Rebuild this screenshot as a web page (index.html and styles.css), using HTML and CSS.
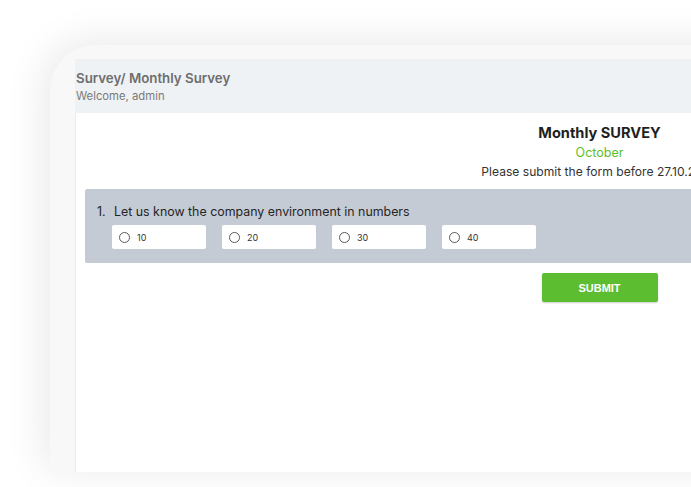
FILE: index.html
```html
<!DOCTYPE html>
<html lang="en">
<head>
<meta charset="utf-8">
<title>Monthly Survey</title>
<link rel="stylesheet" href="styles.css">
</head>
<body>
<div class="stage">
  <div class="device">
    <div class="screen">
      <div class="header">
        <div class="crumb">Survey/ Monthly Survey</div>
        <div class="welcome">Welcome, admin</div>
      </div>
      <div class="card">
        <div class="card-head">
          <div class="survey-title">Monthly SURVEY</div>
          <div class="month">October</div>
          <div class="deadline">Please submit the form before 27.10.2023</div>
        </div>
        <div class="question">
          <div class="q-text"><span class="q-num">1.</span>Let us know the company environment in numbers</div>
          <div class="options">
            <label class="option"><span class="radio"></span>10</label>
            <label class="option"><span class="radio"></span>20</label>
            <label class="option"><span class="radio"></span>30</label>
            <label class="option"><span class="radio"></span>40</label>
          </div>
        </div>
        <div class="actions">
          <button class="submit">SUBMIT</button>
        </div>
      </div>
    </div>
  </div>
</div>
</body>
</html>
```
FILE: styles.css
```css
html, body {
  margin: 0;
  padding: 0;
  background: #ffffff;
}
body {
  width: 691px;
  height: 487px;
  overflow: hidden;
  font-family: "Inter", "Open Sans", sans-serif;
  color: #222;
}
.stage {
  padding: 45px 0 0 50px;
}
.device {
  width: 1073px;
  height: 427px;
  box-sizing: border-box;
  background: #f8f8f8;
  border-radius: 46px 0 0 0;
  padding: 14px 0 0 25px;
  box-shadow: -6px -4px 40px rgba(0, 0, 0, 0.09);
}
.screen {
  height: 100%;
  background: #eff2f5;
  display: flex;
  flex-direction: column;
}
.header {
  height: 54px;
  box-sizing: border-box;
  padding: 10px 0 0 1px;
}
.crumb {
  font-size: 13.3px;
  font-weight: 600;
  color: #6e6e6e;
  line-height: 18px;
}
.welcome {
  font-size: 11.3px;
  color: #7a7a7a;
  line-height: 17px;
  margin-top: 1px;
}
.card {
  flex: 1;
  background: #fff;
  border-left: 1px solid #e8ecf2;
  padding: 10px 9px 0 9px;
}
.card-head {
  text-align: center;
}
.survey-title {
  font-size: 14.6px;
  font-weight: 700;
  line-height: 20px;
  color: #1f1f1f;
}
.month {
  font-size: 12.5px;
  line-height: 20px;
  color: #5cbf2a;
}
.deadline {
  font-size: 12.1px;
  line-height: 16px;
  padding-top: 1px;
  color: #333;
  white-space: nowrap;
}
.question {
  margin-top: 9px;
  background: #c5cbd5;
  border-radius: 2px;
  padding: 14px 12px 14px 12px;
}
.q-text {
  font-size: 12.4px;
  line-height: 18px;
  color: #252525;
  display: flex;
}
.q-num {
  width: 17px;
}
.options {
  display: flex;
  gap: 16px;
  padding-left: 15px;
  margin-top: 4px;
}
.option {
  width: 94px;
  height: 24px;
  box-sizing: border-box;
  background: #fff;
  border-radius: 2px;
  display: flex;
  align-items: center;
  padding-left: 7px;
  font-size: 9px;
  color: #333;
}
.radio {
  width: 9px;
  height: 9px;
  border: 1px solid #5a5a5a;
  border-radius: 50%;
  margin-right: 7px;
}
.actions {
  display: flex;
  justify-content: center;
  margin-top: 10px;
}
.submit {
  width: 116px;
  height: 29px;
  border: none;
  border-radius: 2px;
  background: #5bbd2f;
  color: #fff;
  font-family: "Liberation Sans", Arial, sans-serif;
  font-weight: 700;
  font-size: 11px;
  box-shadow: 0 1px 2px rgba(0, 0, 0, 0.2);
}
```
